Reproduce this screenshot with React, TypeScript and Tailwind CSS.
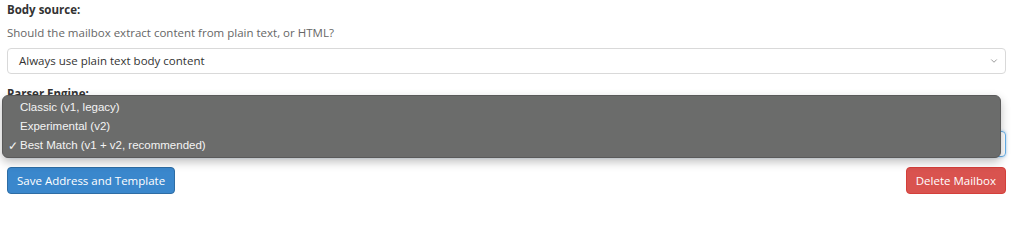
import { ChevronDown } from "lucide-react";

const engines = [
  { label: "Classic (v1, legacy)", checked: false },
  { label: "Experimental (v2)", checked: false },
  { label: "Best Match (v1 + v2, recommended)", checked: true },
];

export default function App() {
  return (
    <div className="relative h-[230px] w-[1024px] bg-white pl-[7px] pr-[18px] font-['Open_Sans',sans-serif] text-[11.5px] text-[#333]">
      <div className="pt-[1px]">
        <div className="h-[18px] font-bold leading-[18px]">Body source:</div>
        <div className="mt-[5px] h-[18px] leading-[18px] text-[#666]">
          Should the mailbox extract content from plain text, or HTML?
        </div>
        <div className="mt-[6px] flex h-[26px] items-center justify-between rounded-[4px] border border-[#d9d9d9] pl-[11px] pr-[6px]">
          <span>Always use plain text body content</span>
          <ChevronDown className="h-[10px] w-[10px] text-[#888]" strokeWidth={2} />
        </div>
      </div>

      <div className="mt-[11px]">
        <div className="h-[18px] font-bold leading-[18px]">Parser Engine:</div>
        <div className="mt-[28px] flex h-[26px] items-center justify-between rounded-[4px] border border-[#66afe9] pl-[11px] pr-[6px] shadow-[0_0_3px_rgba(102,175,233,0.6)]">
          <span>Best Match (v1 + v2, recommended)</span>
          <ChevronDown className="h-[10px] w-[10px] text-[#888]" strokeWidth={2} />
        </div>
      </div>

      <div className="mt-[10px] flex justify-between">
        <button className="h-[27px] rounded-[4px] border border-[#2e6da4] bg-[#3a87cc] px-[9px] text-[11.5px] text-white">
          Save Address and Template
        </button>
        <button className="h-[27px] rounded-[4px] border border-[#d43f3a] bg-[#d9534f] px-[9px] text-[11.5px] text-white">
          Delete Mailbox
        </button>
      </div>

      {/* native select popup, drawn open over the form */}
      <div className="absolute left-[2px] top-[95px] w-[999px] rounded-[6px] border border-[#5a5a5a] bg-[#6b6c6b] py-[2px] font-['Liberation_Sans',sans-serif] text-[11.5px] text-[#f4f4f4] shadow-[0_4px_10px_rgba(0,0,0,0.25)]">
        {engines.map((e) => (
          <div key={e.label} className="flex h-[19px] items-center">
            <span className="w-[17px] pl-[5px] text-[12px] leading-none">{e.checked ? "✓" : ""}</span>
            <span>{e.label}</span>
          </div>
        ))}
      </div>
    </div>
  );
}
